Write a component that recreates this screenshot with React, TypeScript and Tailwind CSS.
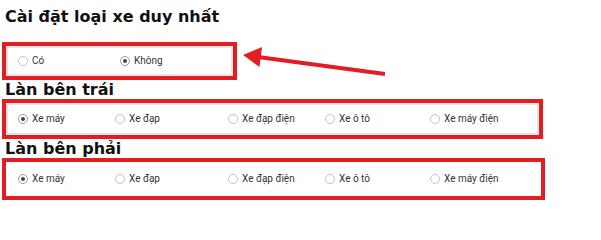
import React from "react"

type Option = { label: string; width: string; checked?: boolean }

const uniqueOptions: Option[] = [
  { label: "Có", width: "w-[102px]" },
  { label: "Không", width: "w-[90px]", checked: true },
]

const laneOptions: Option[] = [
  { label: "Xe máy", width: "w-[97px]", checked: true },
  { label: "Xe đạp", width: "w-[113px]" },
  { label: "Xe đạp điện", width: "w-[97px]" },
  { label: "Xe ô tô", width: "w-[105px]" },
  { label: "Xe máy điện", width: "w-[80px]" },
]

function Radio({ option }: { option: Option }) {
  return (
    <label className={`flex items-center gap-[4px] ${option.width}`}>
      <span
        className={`flex items-center justify-center w-[10px] h-[10px] rounded-full border bg-white ${
          option.checked ? "border-[#9a9a9a]" : "border-[#c4c4c4]"
        }`}
      >
        {option.checked && <span className="w-[4px] h-[4px] rounded-full bg-[#444]" />}
      </span>
      <span className="text-[10px] leading-[12px] text-[#333]">{option.label}</span>
    </label>
  )
}

function Heading({ children }: { children: React.ReactNode }) {
  return (
    <h2 className="pl-[5px] text-[16px] font-bold leading-[19px] text-[#111] font-['DejaVu_Sans',sans-serif]">
      {children}
    </h2>
  )
}

export default function App() {
  return (
    <div className="relative w-[601px] h-[201px] bg-white overflow-hidden font-['Roboto',sans-serif]">
      <div className="pl-[5px] pt-[7px] text-[16px] font-bold leading-[20px] text-[#111] font-['DejaVu_Sans',sans-serif]">
        Cài đặt loại xe duy nhất
      </div>

      <div className="ml-[2px] mt-[15px] w-[235px] h-[38px] border-4 border-[#e31e22]">
        <div className="h-full flex items-center pl-[10px] border-2 border-[#e6e6e6]">
          {uniqueOptions.map((o) => (
            <Radio key={o.label} option={o} />
          ))}
        </div>
      </div>

      <Heading>Làn bên trái</Heading>
      <div className="ml-[2px] w-[541px] h-[40px] border-4 border-[#e31e22]">
        <div className="h-full flex items-center pl-[10px] border-2 border-[#e6e6e6]">
          {laneOptions.map((o) => (
            <Radio key={o.label} option={o} />
          ))}
        </div>
      </div>

      <Heading>Làn bên phải</Heading>
      <div className="ml-[2px] w-[543px] h-[42px] border-4 border-[#e31e22]">
        <div className="h-full flex items-center pl-[12px]">
          {laneOptions.map((o) => (
            <Radio key={o.label} option={o} />
          ))}
        </div>
      </div>

      {/* callout arrow */}
      <svg className="absolute left-0 top-0" width="601" height="201" viewBox="0 0 601 201">
        <line x1="385" y1="74" x2="258" y2="57" stroke="#e31e22" strokeWidth="4" />
        <polygon points="243,55 262,47 259.5,67" fill="#e31e22" />
      </svg>
    </div>
  )
}
